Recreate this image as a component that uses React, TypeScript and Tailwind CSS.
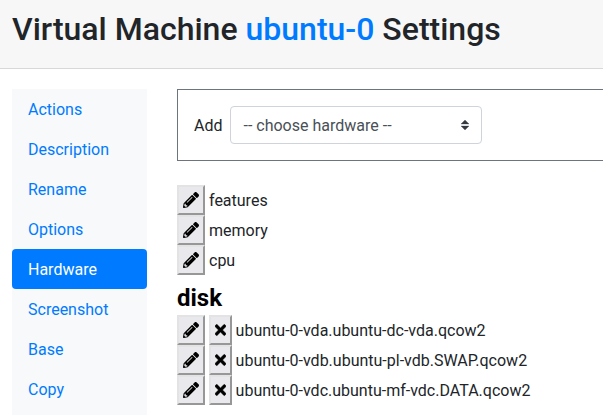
import { FaPencilAlt, FaTimes } from "react-icons/fa";
import type { ReactNode } from "react";

const links = ["Actions", "Description", "Rename", "Options", "Hardware", "Screenshot", "Base", "Copy"];
const features = ["features", "memory", "cpu"];
const disks = [
  "ubuntu-0-vda.ubuntu-dc-vda.qcow2",
  "ubuntu-0-vdb.ubuntu-pl-vdb.SWAP.qcow2",
  "ubuntu-0-vdc.ubuntu-mf-vdc.DATA.qcow2",
];

function ToolButton({ label, narrow, children }: { label: string; narrow?: boolean; children: ReactNode }) {
  return (
    <button
      aria-label={label}
      className={`flex h-[30px] shrink-0 items-center justify-center border-2 border-t-[#e3e3e3] border-l-[#e3e3e3] border-r-[#979797] border-b-[#979797] bg-[#e9e9ed] text-black ${narrow ? "w-[23px]" : "w-7"}`}
    >
      {children}
    </button>
  );
}

function HardwareRow({ name, removable }: { name: string; removable?: boolean }) {
  return (
    <li className="flex h-[30px] items-center gap-1">
      <ToolButton label={`Edit ${name}`}>
        <FaPencilAlt className="size-4" stroke="none" />
      </ToolButton>
      {removable && (
        <ToolButton label={`Remove ${name}`} narrow>
          <FaTimes className="h-4 w-[11px]" stroke="currentColor" strokeWidth={14} />
        </ToolButton>
      )}
      <span className={`pt-0.5 whitespace-nowrap ${removable ? "-ml-[0.4px]" : ""}`}>{name}</span>
    </li>
  );
}

export default function App() {
  return (
    <div className="h-[415px] w-[603px] overflow-hidden bg-white font-['Roboto',sans-serif] text-base leading-6 text-[#212529]">
      <header className="h-[69px] border-b border-[#d8d8d8] bg-[#f7f7f7] px-3 pt-[10px]">
        <h1 className="text-[32px] leading-[38.4px] font-medium whitespace-nowrap">
          Virtual Machine <span className="text-[#007bff]">ubuntu-0</span> Settings
        </h1>
      </header>
      <div className="flex gap-[30px] pt-5 pl-3">
        <nav className="h-[326px] w-[135px] shrink-0 bg-[#f8f9fa]">
          {links.map((link) => (
            <a
              key={link}
              className={`block px-4 pt-[9px] pb-[7px] ${link === "Hardware" ? "rounded bg-[#007bff] text-white" : "text-[#007bff]"}`}
            >
              {link}
            </a>
          ))}
        </nav>
        <main className="min-w-0 flex-1">
          <div className="flex h-[72px] items-center gap-2 border border-r-0 border-[#6c757d] pl-4">
            <label className="pt-0.5">Add</label>
            <div className="flex h-[38px] w-[252px] items-center justify-between rounded border border-[#ced4da] bg-white px-3 text-[#495057]">
              <span className="pt-0.5">-- choose hardware --</span>
              <svg viewBox="0 0 4 5" className="h-[10px] w-2" fill="#343a40" stroke="#343a40" strokeWidth="0.15">
                <path d="M2 0L0 2h4zm0 5L0 3h4z" />
              </svg>
            </div>
          </div>
          <ul className="mt-6">
            {features.map((name) => (
              <HardwareRow key={name} name={name} />
            ))}
          </ul>
          <h2 className="mt-2 flex h-8 items-center pb-0.5 text-2xl font-bold text-black">disk</h2>
          <ul>
            {disks.map((name) => (
              <HardwareRow key={name} name={name} removable />
            ))}
          </ul>
        </main>
      </div>
    </div>
  );
}
